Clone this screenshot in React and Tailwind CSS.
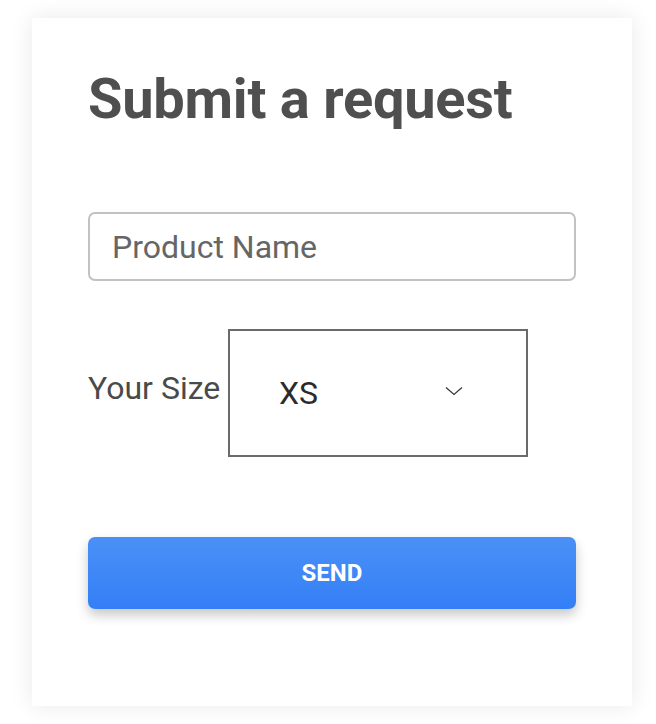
import React from 'react';

const Chevron = () => (
  <svg width="18" height="10" viewBox="0 0 18 10" fill="none">
    <path d="M1 1.5L9 8.5L17 1.5" stroke="#3a3a3a" strokeWidth="1.3" />
  </svg>
);

const App = () => {
  return (
    <div className="min-h-[724px] bg-white pt-[18px] pl-[32px] font-['Roboto',sans-serif]">
      {/* Request card */}
      <div className="w-[600px] h-[688px] bg-white shadow-[0_0_22px_rgba(0,0,0,0.09)] px-[56px] pt-[53px]">
        <h1 className="text-[56px] leading-[56px] font-bold tracking-[-0.25px] text-[#4f4f4f]">Submit a request</h1>

        <input
          type="text"
          placeholder="Product Name"
          className="mt-[85px] block w-full h-[69px] rounded-[7px] border-2 border-[#c2c2c2] pl-[22px] text-[32px] text-[#333] placeholder:text-[#666] outline-none"
        />

        <div className="mt-[48px] flex items-center">
          <span className="w-[140px] text-[32px] text-[#4a4a4a] -mt-[11px]">Your Size</span>
          <div className="w-[300px] h-[128px] border-2 border-[#6a6a6a] flex items-center pl-[49px] pr-[63px]">
            <span className="text-[32px] text-[#2b2b2b] flex-1">XS</span>
            <span className="-mt-[5px]">
              <Chevron />
            </span>
          </div>
        </div>

        <button className="mt-[80px] w-full h-[72px] rounded-[7px] bg-gradient-to-b from-[#4a90f6] to-[#347ff7] shadow-[0_6px_12px_rgba(0,0,0,0.22)] text-white text-[24px] font-bold">
          SEND
        </button>
      </div>
    </div>
  );
};

export default App;
